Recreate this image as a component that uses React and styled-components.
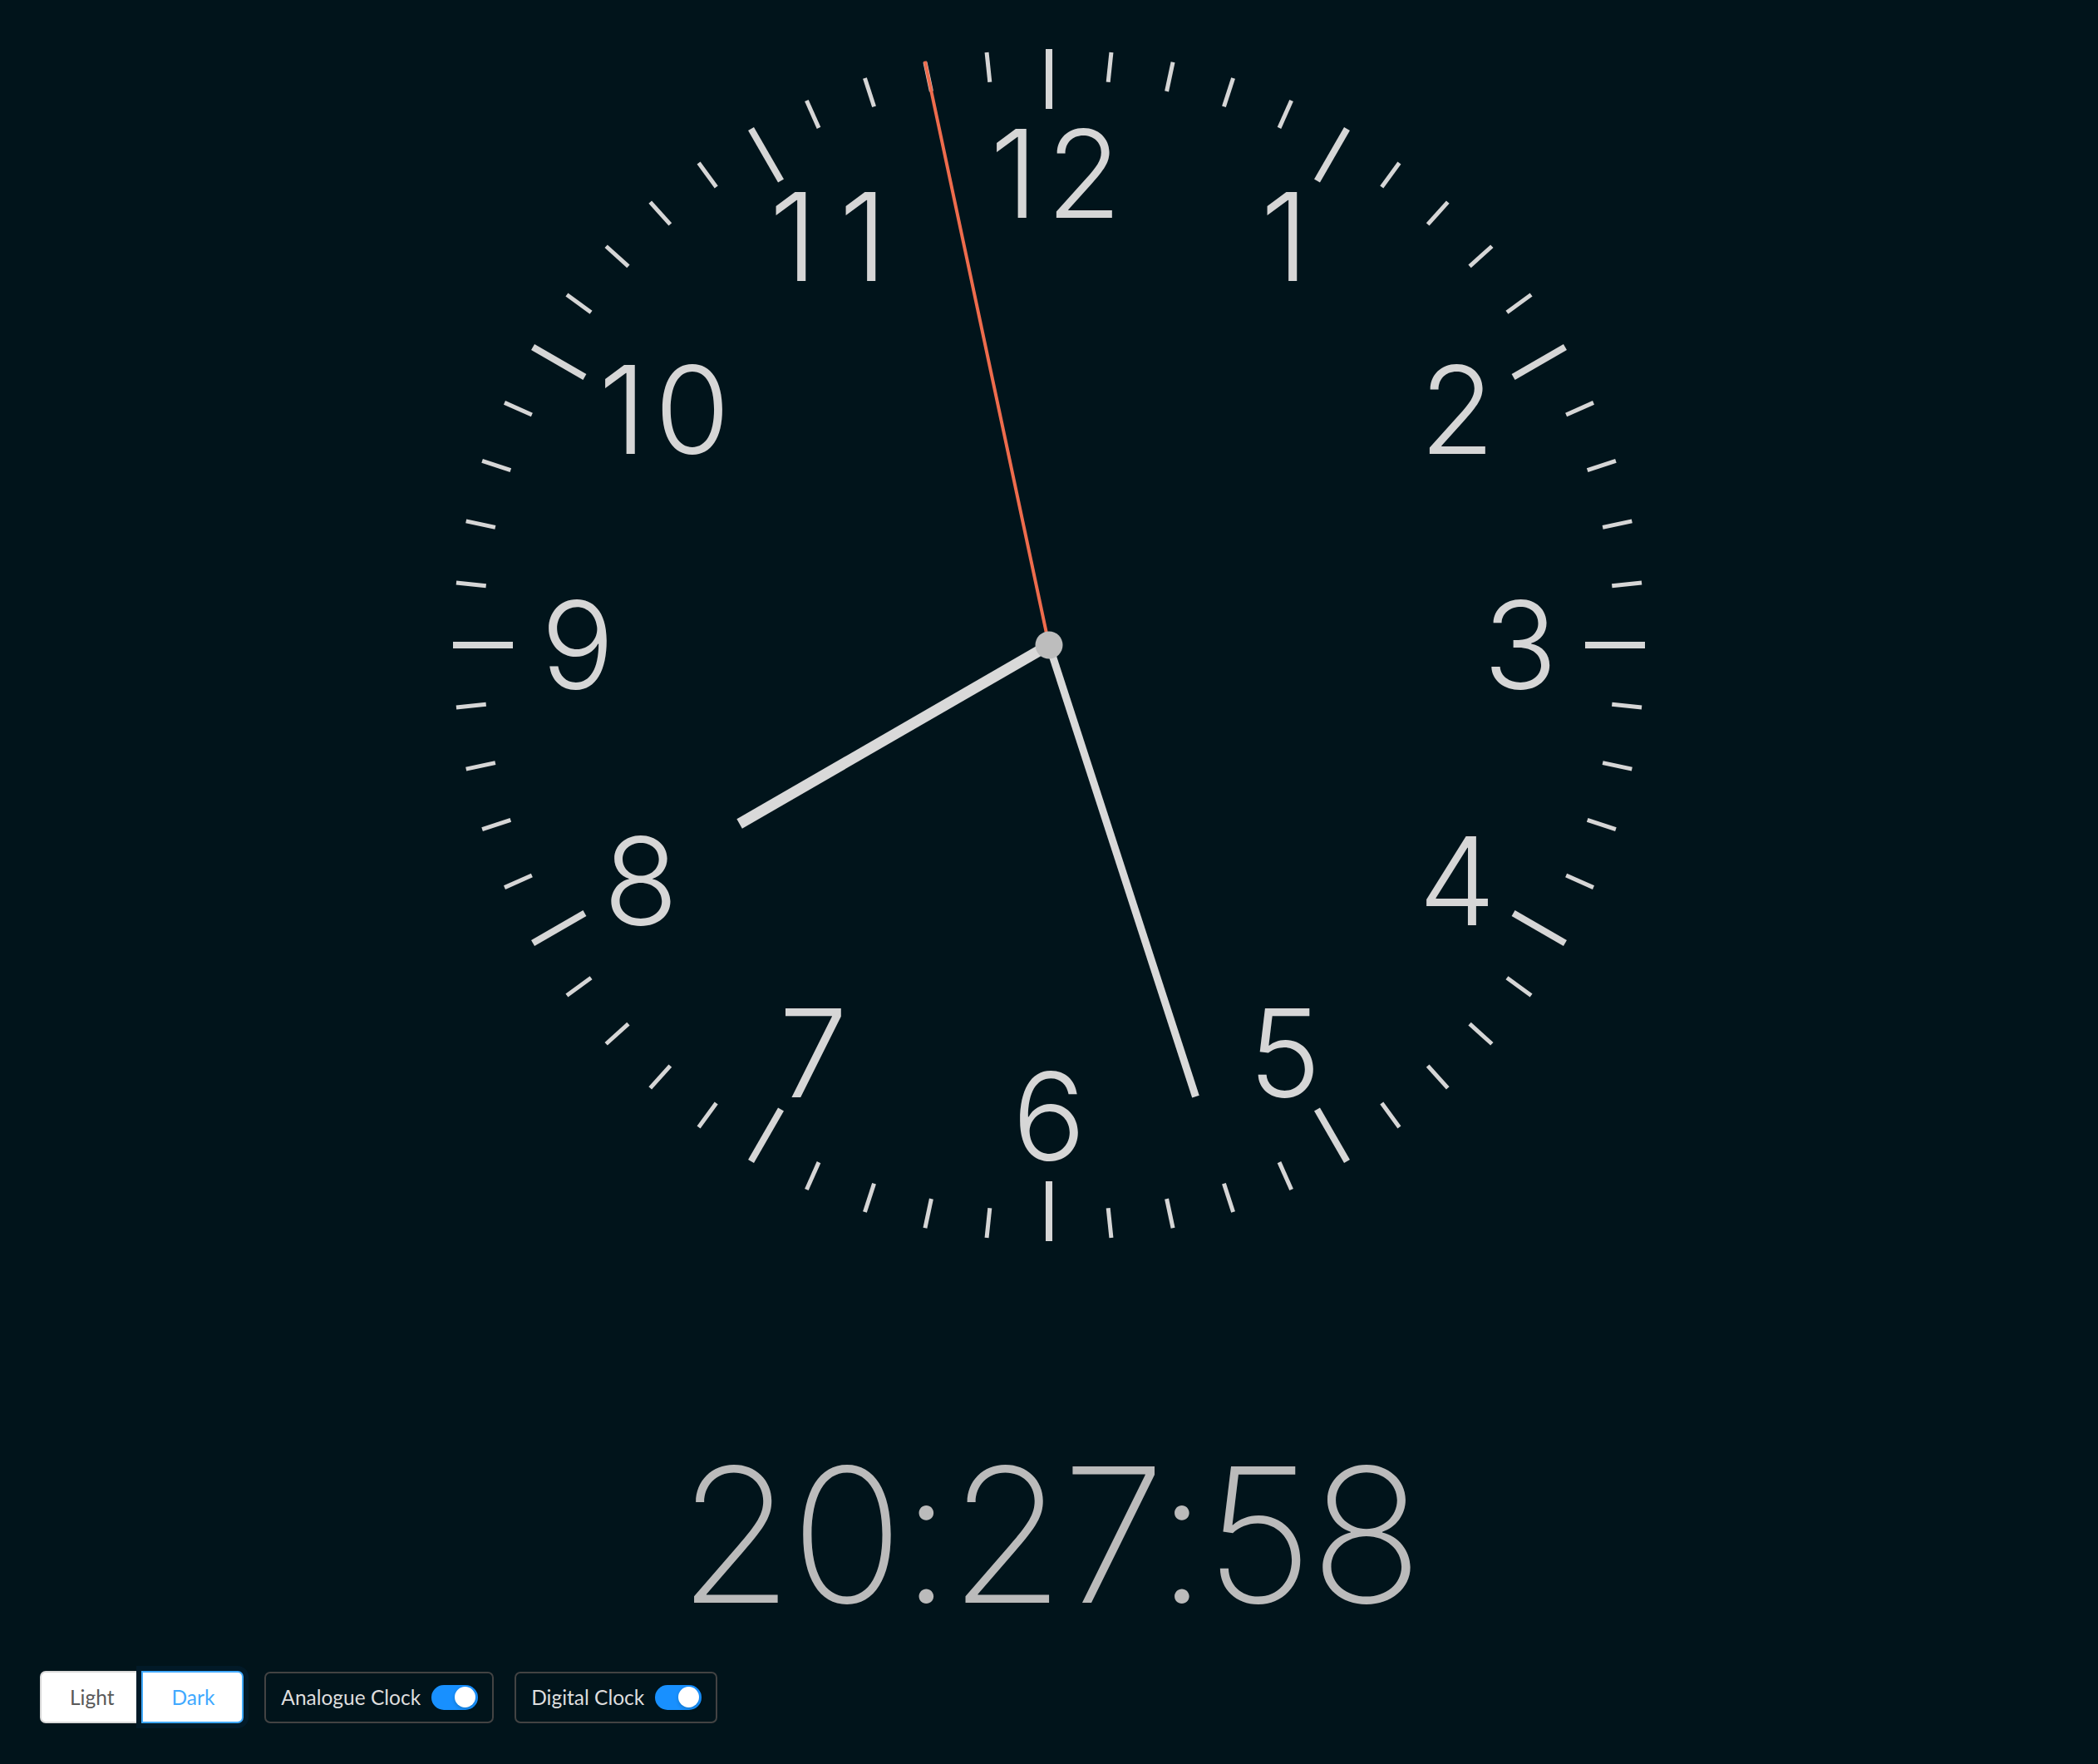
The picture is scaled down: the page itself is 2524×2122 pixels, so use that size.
import React from 'react'
import styled, { createGlobalStyle } from 'styled-components'

const GlobalStyle = createGlobalStyle`
  html, body {
    margin: 0;
    padding: 0;
    background: #01141b;
  }
  * {
    box-sizing: border-box;
  }
`

// the picture is one fixed moment
const NOW = { h: 20, m: 27, s: 58 }
const SIZE = 1440
const C = SIZE / 2
const OUTER = 717
// helvetica-like digit advance, keeps "11" / "10" spread out
const DIGIT_ADV = 84
// the leading "1" of 10 and 11 sits a bit to the right in the original font
const NUDGE = { 10: 20, 11: 18 }

const Page = styled.main`
  min-height: 100vh;
  display: flex;
  flex-direction: column;
  align-items: center;
  padding-top: 56px;
  background: #01141b;
`

const Face = styled.svg`
  display: block;
  width: ${SIZE}px;
  height: ${SIZE}px;
  flex-shrink: 0;
`

const Tick = styled.line`
  stroke: #d6d6d6;
  stroke-width: ${p => (p.$major ? 8 : 5)};
`

const Numeral = styled.text`
  fill: #d6d6d6;
  font-family: Inter, 'Liberation Sans', sans-serif;
  font-weight: 300;
  font-size: 147px;
`

const Hand = styled.line`
  stroke: ${p => p.$color || '#d9d9d9'};
  stroke-width: ${p => p.$width};
  stroke-linecap: butt;
`

const Pivot = styled.circle`
  fill: #bdbdbd;
`

const DigitalTime = styled.div`
  margin-top: 238px;
  font-family: Inter, 'Liberation Sans', sans-serif;
  font-weight: 200;
  font-size: 225px;
  letter-spacing: -3.5px;
  line-height: 1;
  color: #bbbbbb;
`

const Controls = styled.div`
  align-self: stretch;
  margin-top: auto;
  display: flex;
  align-items: center;
  gap: 25px;
  padding: 0 48px 49px;
  font-family: Lato, 'Open Sans', sans-serif;
  font-size: 24.5px;
`

const Segmented = styled.div`
  display: flex;
  height: 63px;
`

const Segment = styled.div`
  display: flex;
  align-items: center;
  padding: 0 33px 0 34px;
  background: #fff;
  border: 2px solid ${p => (p.$active ? '#40a9ff' : '#d9d9d9')};
  color: ${p => (p.$active ? '#40a9ff' : '#595959')};
  box-shadow: ${p => (p.$active ? '0 0 0 6px #021a28' : 'none')};
  position: relative;
  z-index: ${p => (p.$active ? 1 : 0)};
  &:first-child {
    border-radius: 7px 0 0 7px;
    border-right: none;
  }
  &:last-child {
    border-radius: 0 7px 7px 0;
  }
`

const ToggleBox = styled.div`
  display: flex;
  align-items: center;
  gap: 13px;
  height: 62px;
  padding: 0 17px 0 18px;
  border: 2px solid #434343;
  border-radius: 7px;
  color: #dedede;
`

const Switch = styled.div`
  display: flex;
  justify-content: ${p => (p.$on ? 'flex-end' : 'flex-start')};
  align-items: center;
  width: 56px;
  height: 30px;
  padding: 0 3px;
  border-radius: 15px;
  background: ${p => (p.$on ? '#1890ff' : '#595959')};
`

const Knob = styled.span`
  width: 25px;
  height: 25px;
  border-radius: 50%;
  background: #fff;
  box-shadow: 0 2px 4px rgba(0, 35, 11, 0.2);
`

function polar(angle, r) {
  const rad = (angle * Math.PI) / 180
  return [C + r * Math.sin(rad), C - r * Math.cos(rad)]
}

function HourNumber({ n }) {
  const [x, y] = polar(n * 30, 567)
  const digits = String(n).split('')
  const start = x + (NUDGE[n] || 0) - ((digits.length - 1) * DIGIT_ADV) / 2
  return (
    <Numeral y={y + 53} textAnchor="middle">
      {digits.map((d, i) => (
        <tspan key={i} x={start + i * DIGIT_ADV}>{d}</tspan>
      ))}
    </Numeral>
  )
}

function ClockFace({ h, m, s }) {
  const ticks = Array.from({ length: 60 }, (_, i) => i)
  const hours = Array.from({ length: 12 }, (_, i) => i + 1)
  return (
    <Face viewBox={`0 0 ${SIZE} ${SIZE}`}>
      {ticks.map(i => {
        const major = i % 5 === 0
        const len = major ? 72 : 36
        return (
          <Tick
            key={i}
            $major={major}
            x1={C}
            y1={C - OUTER}
            x2={C}
            y2={C - OUTER + len}
            transform={`rotate(${i * 6} ${C} ${C})`}
          />
        )
      })}
      {hours.map(n => <HourNumber key={n} n={n} />)}
      <Hand $width={13} x1={C} y1={C} x2={C} y2={C - 430} transform={`rotate(${(h % 12) * 30} ${C} ${C})`} />
      <Hand $width={9} x1={C} y1={C} x2={C} y2={C - 571} transform={`rotate(${m * 6} ${C} ${C})`} />
      <Hand $width={4} $color="#ee6c4d" x1={C} y1={C} x2={C} y2={C - 718} transform={`rotate(${s * 6} ${C} ${C})`} />
      <Pivot cx={C} cy={C} r={16.5} />
    </Face>
  )
}

const pad = n => String(n).padStart(2, '0')

export default function App() {
  const { h, m, s } = NOW
  return (
    <>
      <GlobalStyle />
      <Page>
        <ClockFace h={h} m={m} s={s} />
        <DigitalTime>{`${pad(h)}:${pad(m)}:${pad(s)}`}</DigitalTime>
        <Controls>
          <Segmented>
            <Segment>Light</Segment>
            <Segment $active>Dark</Segment>
          </Segmented>
          <ToggleBox>
            Analogue Clock
            <Switch $on><Knob /></Switch>
          </ToggleBox>
          <ToggleBox>
            Digital Clock
            <Switch $on><Knob /></Switch>
          </ToggleBox>
        </Controls>
      </Page>
    </>
  )
}
